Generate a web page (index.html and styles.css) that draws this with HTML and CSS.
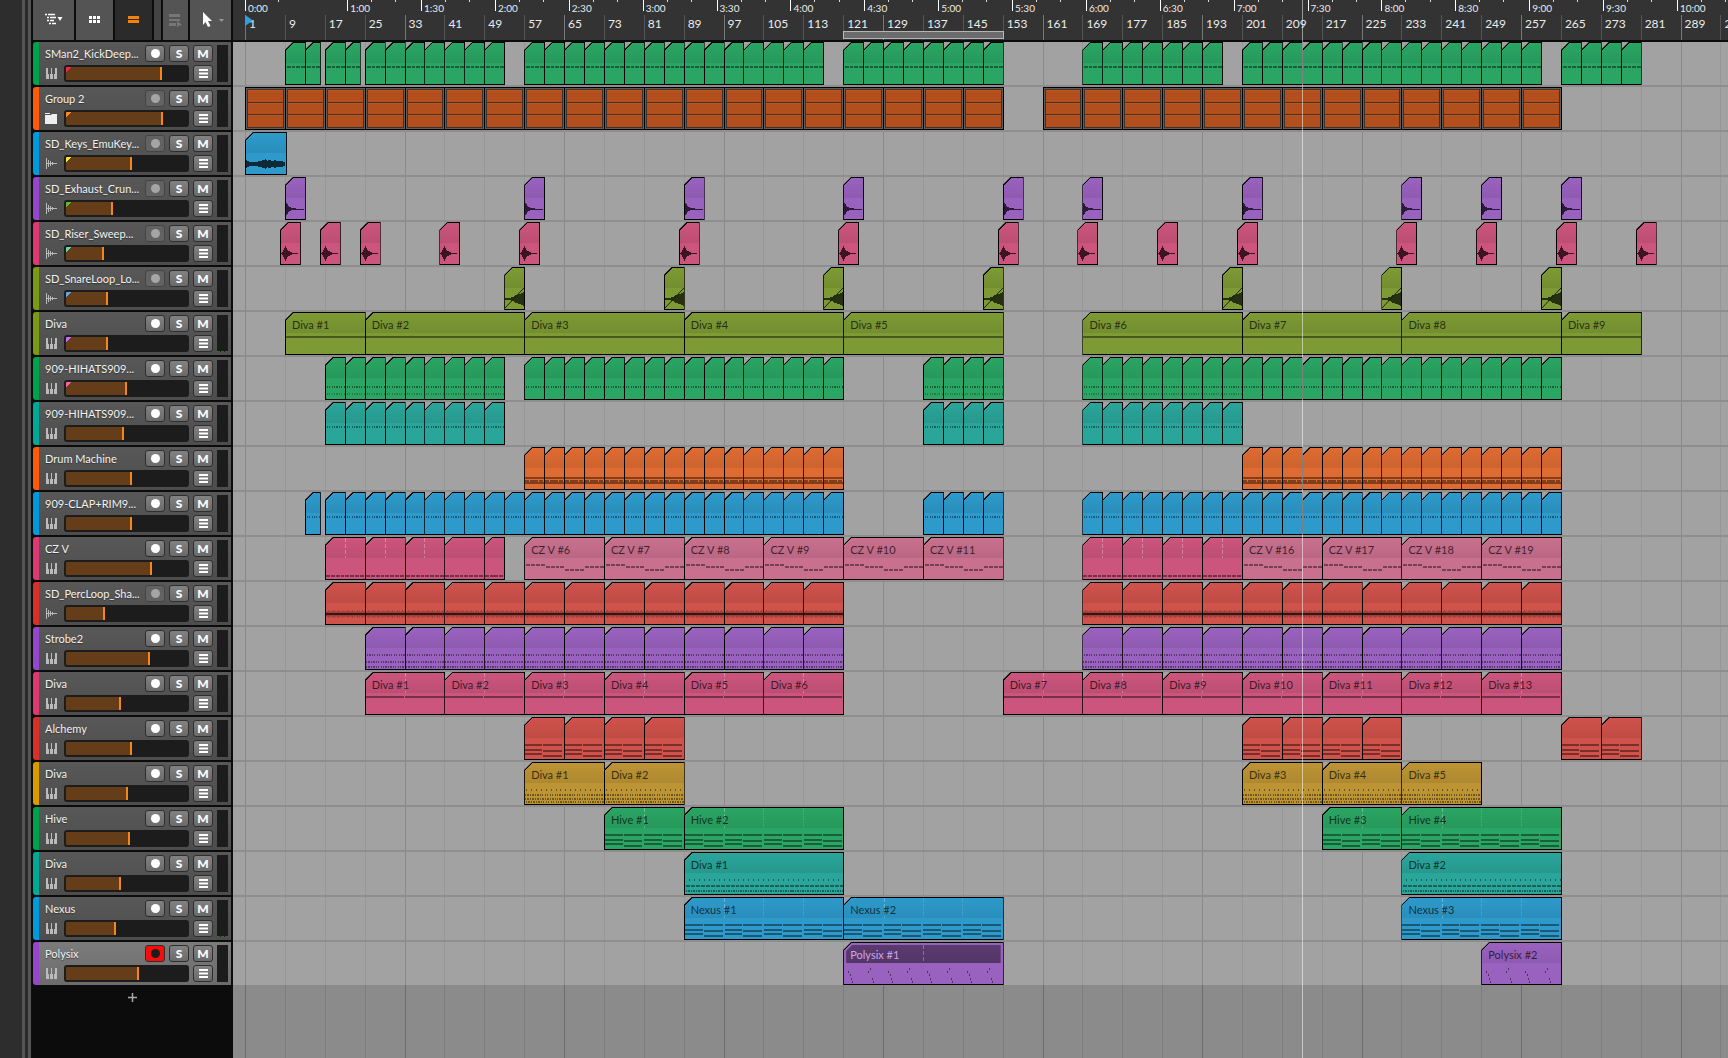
FILE: index.html
```html
<!DOCTYPE html>
<html lang="en">
    <head>
        <meta charset="UTF-8" />
        <meta name="viewport" content="width=device-width, initial-scale=1.0" />
        <title>Arranger</title>
        <link rel="stylesheet" href="styles.css">
    </head>
    <body>
        <div class="gutter"></div>
        <div class="edge"></div>
        <div class="edge"></div>
        <aside class="sidebar">
            <div class="toolbar">
                <button type="button" class="tool tool-wide" aria-label="Track view">
                    <svg width="20" height="14" viewBox="0 0 20 14">
                        <path d="M1 1.500h2M4 1.500h7M3 4.500h2M6 4.500h6M3 7.500h2M6 7.500h4M5 10.500h2M8 10.500h4" stroke="#fff" stroke-width="1.500" />
                        <path d="M13.500 4h5l-2.500 4z" fill="#fff" />
                    </svg>
                </button>
                <button type="button" class="tool" aria-label="Clip launcher">
                    <svg width="12" height="8" viewBox="0 0 12 8">
                        <path d="M0 0h3v3h-3zM4 0h3v3h-3zM8 0h3v3h-3zM0 4h3v3h-3zM4 4h3v3h-3zM8 4h3v3h-3z" fill="#fff" />
                    </svg>
                </button>
                <button type="button" class="tool active" aria-label="Arranger">
                    <svg width="12" height="8" viewBox="0 0 12 8">
                        <path d="M0 0h11v3h-11zM0 4h11v3h-11z" fill="#f5820f" />
                    </svg>
                </button>
                <div class="tool-space"></div>
                <button type="button" class="tool tool-small" aria-label="Follow" disabled>
                    <svg width="13" height="13" viewBox="0 0 13 13">
                        <path d="M0 0h11v3h-11zM0 5h11v2h-11zM0 9h7v3h-7zM8 7l5 3.500-5 2.500z" fill="#777" />
                    </svg>
                </button>
                <button type="button" class="tool tool-wide" aria-label="Pointer tool">
                    <svg width="22" height="16" viewBox="0 0 22 16">
                        <path d="M3 0l9 9h-4l2.500 5-2.500 1-2.500-5-2.500 3z" fill="#fff" />
                        <path d="M19 7h5l-2.500 3z" fill="#999" />
                    </svg>
                </button>
            </div>
            <div class="tracks" id="tracks"></div>
            <button type="button" class="add" aria-label="Add track">
                <svg width="9" height="9" viewBox="0 0 9 9"><path d="M4 0h1v4h4v1h-4v4h-1v-4h-4v-1h4z" fill="#aaa" stroke="#aaa" stroke-width=".5" /></svg>
            </button>
        </aside>
        <main class="timeline">
            <div class="ruler">
                <div class="times" id="times"></div>
                <div class="bars" id="bars"></div>
                <svg class="start" width="8" height="12" viewBox="0 0 8 12"><path d="M0 0l8 5.500-8 5.500z" fill="#2f9fe0" /></svg>
                <div class="loop" id="loop"></div>
            </div>
            <div class="canvas">
                <div class="lines" id="lines"></div>
                <div class="lanes" id="lanes"></div>
            </div>
            <div class="playhead" id="playhead"></div>
        </main>
        <script src="script.js"></script>
    </body>
</html>
```

FILE: styles.css
```css
* {
    margin: 0;
    padding: 0;
    box-sizing: border-box;
}
body {
    display: flex;
    min-height: 100vh;
    overflow: hidden;
    background-color: #0c0c0c;
    font-family: Lato, "Liberation Sans", sans-serif;
    font-size: 11px;
}
button {
    border: none;
    font-family: inherit;
    cursor: pointer;
}
.gutter {
    width: 22px;
    background-color: #2d2d2d;
}
.edge {
    width: 6px;
    border-left: 3px solid #555;
    background-color: #2a2a2a;
}
.edge + .edge {
    width: 3px;
    background-color: #555;
}
.sidebar {
    width: 202px;
    padding: 0 2px;
    flex-shrink: 0;
}

/* toolbar */
.toolbar {
    display: flex;
    gap: 2px;
    height: 40px;
    margin-bottom: 2px;
}
.tool {
    flex: 37 1 0;
    display: flex;
    justify-content: center;
    align-items: center;
    background-color: #545454;
}
.tool svg {
    overflow: visible;
}
.tool-wide {
    flex-grow: 41;
}
.tool-small {
    flex-grow: 25;
}
.tool.active {
    background-color: #2b2b2b;
}
.tool-space {
    flex: 7 1 0;
    background-color: #434343;
}

/* track headers */
.tracks {
    display: grid;
    grid-template-columns: minmax(0, 1fr);
    gap: 2px;
}
.track {
    display: flex;
    height: 43px;
    padding-right: 3px;
    border-left: 6px solid var(--strip);
    border-radius: 3px 0 0 3px;
    background: linear-gradient(#585858, #4d4d4d);
}
.track.selected {
    background: linear-gradient(#7b7b7b, #6c6c6c);
}
.track-body {
    flex: 1;
    min-width: 0;
    padding: 3px 4px 2px 6px;
}
.row {
    display: flex;
    align-items: center;
    gap: 4px;
    height: 17px;
    margin-bottom: 3px;
}
.row .name {
    flex: 1;
    min-width: 0;
    overflow: hidden;
    white-space: nowrap;
    color: #f2f2f2;
    line-height: 17px;
    text-shadow: 0 1px 1px #333;
}
.row .type {
    width: 13px;
    flex-shrink: 0;
}
.btn {
    display: flex;
    justify-content: center;
    align-items: center;
    width: 20px;
    height: 17px;
    flex-shrink: 0;
    border: 1px solid #2e2e2e;
    border-radius: 3px;
    background: linear-gradient(#828282, #6a6a6a);
    color: #fff;
    font-size: 12px;
    font-weight: 900;
    line-height: 15px;
}
.rec::before {
    content: "";
    width: 9px;
    height: 9px;
    border-radius: 50%;
    background-color: #fff;
}
.rec.off {
    border-color: #444;
    background: #626262;
}
.rec.off::before {
    background-color: #a5a5a5;
}
.rec.armed {
    background: #fa0c0c;
}
.rec.armed::before {
    background-color: #1c1c1c;
}
.volume {
    flex: 1;
    min-width: 0;
    height: 17px;
    margin-left: 2px;
    appearance: none;
    border: 2px solid #1c1c1c;
    border-radius: 3px;
    background-color: #1c1c1c;
    background-image: linear-gradient(135deg, var(--tip) 4px, transparent 4px), linear-gradient(#653d18, #653d18);
    background-size: 100% 100%, var(--level) 100%;
    background-repeat: no-repeat;
}
.volume::-webkit-slider-thumb {
    appearance: none;
    width: 2px;
    height: 13px;
    background-color: #f5861b;
}
.meter {
    width: 11px;
    height: 37px;
    flex-shrink: 0;
    margin-top: 3px;
    background-color: #1c1c1c;
}
.meter.live {
    border-bottom: 1px dashed #2e6b2e;
}
.add {
    display: block;
    width: 100%;
    height: 24px;
    background: none;
    line-height: 0;
}

/* ruler */
.timeline {
    position: relative;
    flex: 1;
    min-width: 0;
    display: flex;
    flex-direction: column;
    overflow: hidden;
}
.ruler {
    position: relative;
    height: 42px;
    border-bottom: 2px solid #0c0c0c;
    background-color: #333;
}
.times,
.bars {
    display: flex;
    padding-left: 12px;
    color: #ececec;
    white-space: nowrap;
}
.times {
    height: 15px;
    font-size: 10px;
}
.time {
    display: flex;
    flex-shrink: 0;
    height: 11px;
    border-left: 1px solid #fff;
    line-height: 16px;
}
.time span {
    width: 0;
    margin-left: 2px;
}
.time i {
    width: 33%;
    height: 2px;
    border-right: 1px solid #ddd;
}
.time i:first-of-type {
    margin-left: -2px;
}
.bar {
    flex-shrink: 0;
    height: 25px;
    padding-left: 3px;
    border-left: 1px solid #555;
    font-size: 12px;
    line-height: 18px;
}
.bar:nth-child(4n + 1) {
    border-color: #777;
}
.start {
    position: absolute;
    left: 12px;
    top: 15px;
}
.loop {
    position: absolute;
    top: 31px;
    height: 8px;
    border: 1px solid #b5b5b5;
    background-color: #6c6c6c;
}
.playhead {
    position: absolute;
    top: 0;
    bottom: 0;
    width: 1px;
    background-color: rgba(255, 255, 255, 0.5);
}

/* clips */
.canvas {
    flex: 1;
    display: grid;
    background-color: #8b8b8b;
}
.lines,
.lanes {
    grid-area: 1 / 1;
    min-width: 0;
}
.lines {
    display: flex;
    padding-left: 12px;
    overflow: hidden;
}
.lines i {
    flex-shrink: 0;
    border-left: 1px solid #7d7d7d;
}
.lines i:nth-child(4n + 1) {
    border-color: #6c6c6c;
}
.lanes {
    align-self: start;
    overflow: hidden;
}
.lane {
    display: flex;
    height: 45px;
    padding-left: 12px;
    border-bottom: 2px solid #8e8e8e;
    background-color: rgba(255, 255, 255, 0.2);
    background-clip: padding-box;
}
.lane:last-child {
    height: 43px;
    border-bottom: none;
}
.clip {
    flex-shrink: 0;
    height: 43px;
    margin-right: -1px;
    border: 1px solid #000;
    background-color: var(--clip);
    background-image: linear-gradient(135deg, #000 5px, transparent 5px);
    clip-path: polygon(8px 0, 100% 0, 100% 100%, 0 100%, 0 8px);
}
.clip .title {
    height: 20px;
    padding-left: 6px;
    overflow: hidden;
    background-image: linear-gradient(transparent, rgba(0, 0, 0, 0.08));
    color: rgba(0, 0, 0, 0.7);
    line-height: 23px;
    white-space: nowrap;
}
.clip .title.half {
    background-image: linear-gradient(transparent, rgba(0, 0, 0, 0.08)), repeating-linear-gradient(rgba(255, 255, 255, 0.3) 0 4px, transparent 4px 6px);
    background-size: 100% 100%, 1px 100%;
    background-position: 0 0, 50% 0;
    background-repeat: no-repeat;
}
.clip .title.quarters {
    background-image: linear-gradient(transparent, rgba(0, 0, 0, 0.08)), repeating-linear-gradient(rgba(255, 255, 255, 0.3) 0 4px, transparent 4px 6px), repeating-linear-gradient(rgba(255, 255, 255, 0.2) 0 1px, transparent 1px 2px), repeating-linear-gradient(rgba(255, 255, 255, 0.2) 0 1px, transparent 1px 2px);
    background-size: 100% 100%, 1px 100%, 1px 100%, 1px 100%;
    background-position: 0 0, 25% 0, 50% 0, 75% 0;
    background-repeat: no-repeat;
}
.clip svg {
    display: block;
    width: 100%;
    height: 21px;
}
.clip.selected .title {
    height: 18px;
    margin: 2px 2px 0;
    padding-left: 4px;
    background-color: #5b3a70;
    clip-path: polygon(6px 0, 100% 0, 100% 100%, 0 100%, 0 6px);
    color: #cda6e6;
    line-height: 19px;
}
.clip.group {
    display: grid;
    gap: 1px;
    padding: 2px;
    outline: 1px solid #625b58;
    outline-offset: -2px;
    background: #3a3330;
    clip-path: none;
}
.clip.group i {
    border-top: 1px solid #c4551b;
    background-color: #b24f1c;
}
```

FILE: script.js
```js
const TOTAL_BARS = 297.5;
const PAD = 12;

const pct = (bars) => (bars / TOTAL_BARS) * 100 + "%";
const at = (bar) => `calc(${PAD}px + (100% - ${PAD}px) * ${(bar - 1) / TOTAL_BARS})`;

// clips of equal length, one after another
function run(start, end, step, extra) {
    const list = [];
    for (let b = start; b < end; b += step) {
        list.push({ start: b, end: Math.min(b + step, end), ...extra });
    }
    return list;
}
const hits = (starts) => starts.map((s) => ({ start: s, end: s + 4 }));
// neighbouring named clips: [from, to, to, ...]
function named(name, n, marks, edit) {
    return marks.slice(1).map((end, i) => ({ start: marks[i], end, label: `${name} #${n + i}`, ...edit }));
}

const PINK = "#cc557d";
const tracks = [
    { name: "SMan2_KickDeep...", strip: "#00a14b", clip: "#2aa563", icon: "keys", vol: 96, tip: "#ff2347", notes: "kick",
      clips: [...run(9, 16, 4), ...run(17, 24, 4), ...run(25, 53, 4), ...run(57, 117, 4), ...run(121, 153, 4), ...run(169, 197, 4), ...run(201, 261, 4), ...run(265, 281, 4)] },
    { name: "Group 2", strip: "#ff5a0a", clip: "#b24f1c", icon: "folder", off: true, vol: 97, tip: "#ff8a1f", group: true,
      clips: [...run(1, 153, 8), ...run(161, 265, 8)] },
    { name: "SD_Keys_EmuKey...", strip: "#0099dd", clip: "#2d9acb", icon: "wave", off: true, vol: 66, tip: "#ffe324", notes: "pad", clips: [{ start: 1, end: 9.2 }] },
    { name: "SD_Exhaust_Crun...", strip: "#9447cc", clip: "#9a62bf", icon: "wave", off: true, vol: 46, tip: "#66bb22", notes: "decay", clips: hits([9, 57, 89, 121, 153, 169, 201, 233, 249, 265]) },
    { name: "SD_Riser_Sweep...", strip: "#dd3872", clip: PINK, icon: "wave", off: true, vol: 37, tip: "#66d9a0", notes: "burst", clips: hits([8, 16, 24, 40, 56, 88, 120, 152, 168, 184, 200, 232, 248, 264, 280]) },
    { name: "SD_SnareLoop_Lo...", strip: "#7a9a16", clip: "#7d9a34", icon: "wave", off: true, vol: 41, tip: "#5aa9ee", notes: "rise", clips: hits([53, 85, 117, 149, 197, 229, 261]) },
    { name: "Diva", strip: "#7a9a16", clip: "#7d9a34", icon: "keys", vol: 41, tip: "#c66bff", live: true, notes: "line",
      clips: [...named("Diva", 1, [9, 25, 57, 89, 121, 153]), ...named("Diva", 6, [169, 201, 233, 265, 281])] },
    { name: "909-HIHATS909...", strip: "#00a14b", clip: "#2aa563", icon: "keys", vol: 60, tip: "#ff5fa8", notes: "hats",
      clips: [...run(17, 53, 4, { notes: "hats2" }), ...run(57, 121, 4), ...run(137, 153, 4, { notes: "hats2" }), ...run(169, 201, 4, { notes: "hats2" }), ...run(201, 265, 4)] },
    { name: "909-HIHATS909...", strip: "#00a896", clip: "#2aa59a", icon: "keys", vol: 57, notes: "dots", clips: [...run(17, 53, 4), ...run(137, 153, 4), ...run(169, 201, 4)] },
    { name: "Drum Machine", strip: "#ff5a0a", clip: "#de6b32", icon: "keys", vol: 66, notes: "drums", clips: [...run(57, 121, 4), ...run(201, 265, 4)] },
    { name: "909-CLAP+RIM9...", strip: "#0099dd", clip: "#2d9acb", icon: "keys", vol: 66, notes: "dots", clips: [{ start: 13, end: 16 }, ...run(17, 121, 4), ...run(137, 153, 4), ...run(169, 265, 4)] },
    { name: "CZ V", strip: "#dd3872", clip: PINK, icon: "keys", vol: 86, notes: "low",
      clips: [...run(17, 41, 8, { mark: "half" }), ...run(41, 53, 8), ...named("CZ V", 6, [57, 73, 89, 105, 121, 137, 153], { color: "#c9708f", notes: "steps" }),
              ...run(169, 201, 8, { mark: "half" }), ...named("CZ V", 16, [201, 217, 233, 249, 265], { color: "#c9708f", notes: "steps" })] },
    { name: "SD_PercLoop_Sha...", strip: "#d92f26", clip: "#cf524b", icon: "wave", off: true, vol: 38, notes: "perc", clips: [...run(17, 121, 8), ...run(169, 265, 8)] },
    { name: "Strobe2", strip: "#9447cc", clip: "#9a62bf", icon: "keys", vol: 84, notes: "strobe", clips: [...run(25, 121, 8), ...run(169, 265, 8)] },
    { name: "Diva", strip: "#dd3872", clip: PINK, icon: "keys", vol: 54, notes: "halves",
      clips: [...named("Diva", 1, [25, 41, 57, 73, 89, 105, 121], { mark: "half" }), ...named("Diva", 7, [153, 169, 185, 201, 217, 233, 249, 265], { mark: "half" })] },
    { name: "Alchemy", strip: "#d92f26", clip: "#cf524b", icon: "keys", vol: 66, notes: "chords", clips: [...run(57, 89, 8), ...run(201, 233, 8), ...run(265, 281, 8)] },
    { name: "Diva", strip: "#d99a00", clip: "#bd9434", icon: "keys", vol: 62, notes: "arp", clips: [...named("Diva", 1, [57, 73, 89]), ...named("Diva", 3, [201, 217, 233, 249])] },
    { name: "Hive", strip: "#00a14b", clip: "#2aa563", icon: "keys", vol: 64, notes: "chords",
      clips: [{ start: 73, end: 89, label: "Hive #1", mark: "half" }, { start: 89, end: 121, label: "Hive #2", mark: "quarters" }, { start: 217, end: 233, label: "Hive #3", mark: "half" }, { start: 233, end: 265, label: "Hive #4", mark: "quarters" }] },
    { name: "Diva", strip: "#00a896", clip: "#2aa59a", icon: "keys", vol: 54, notes: "seq", clips: [{ start: 89, end: 121, label: "Diva #1" }, { start: 233, end: 265, label: "Diva #2" }] },
    { name: "Nexus", strip: "#0099dd", clip: "#2d9acb", icon: "keys", vol: 49, live: true, notes: "chords",
      clips: [...named("Nexus", 1, [89, 121, 153], { mark: "quarters" }), ...named("Nexus", 3, [233, 265], { mark: "quarters" })] },
    { name: "Polysix", strip: "#9447cc", clip: "#9a62bf", icon: "keys", vol: 73, selected: true, notes: "falls",
      clips: [{ start: 121, end: 153, label: "Polysix #1", mark: "half", selected: true }, { start: 249, end: 265, label: "Polysix #2" }] },
];

const icons = {
    keys: '<path d="M1 1h2v6h1v5h-3zM6 1h1v6h1v5h-3v-5h1zM10 1h2v11h-3v-5h1z" fill="#bbb"/>',
    folder: '<path d="M0 1h5v1h-5zM0 3h6l1-1h5v10h-12z" fill="#eee"/>',
    wave: '<path d="M1.500 1v11M3.500 3v7M5.500 4v5M7.500 5v3M9.500 6v1M1 6.500h11" stroke="#bbb" fill="none"/>',
};

// one row of note blocks, as path data
function row(w, y, period, on, offset = 0, h = 2) {
    let d = "";
    for (let x = offset; x < w; x += period) {
        d += `M${x} ${y}h${Math.min(on, w - x)}v${h}h-${Math.min(on, w - x)}z`;
    }
    return d;
}
const ink = (d, opacity = 0.42) => `<path d="${d}" fill="#000" fill-opacity="${opacity}"/>`;

const draw = {
    kick: (w) => ink(row(w, 3, 5, 4, 1)),
    line: (w) => ink(row(w, 3, w, w)),
    hats: (w) => ink(row(w, 8, 2.5, 1.25, 1)),
    hats2: (w) => ink(row(w, 8, 2.5, 1.25, 1)) + ink(row(w, 15, 2.5, 1.25, 1), 0.22),
    dots: (w) => ink(row(w, 3, 2.5, 1.25, 1)),
    drums: (w) => ink(row(w, 9, w, w) + row(w, 12, 5, 4) + row(w, 14, w, w)),
    low: (w) => ink(row(w, 17, 5, 4)),
    steps(w) {
        let d = "";
        [6, 8, 11, 8].forEach((y, i) => {
            d += row((w / 4) * (i + 1), y, 5, 4, (w / 4) * i + 1);
        });
        return ink(d);
    },
    strobe: (w) => ink(row(w, 6, 2.5, 1.25, 1) + row(w, 13, 2.5, 1.25) + row(w, 18, 2.5, 1.25)),
    halves: (w) => ink(row(w, 3, 40, 39)),
    chords(w) {
        return ink([6, 11, 15].map((y) => row(w, y, 40, 18)).join("") + [6, 12, 17].map((y) => row(w, y, 40, 19, 20 - 1)).join(""));
    },
    arp: (w) => ink(row(w, 6, 5, 1, 1) + row(w, 11, 2.5, 1.25) + row(w, 15, 2.5, 1.5) + row(w, 18, 2.5, 1.25, 1)),
    seq: (w) => ink(row(w, 6, 5, 1, 4) + row(w, 12, 5, 4, 1) + row(w, 17, 2.5, 1.5, 1)),
    falls(w) {
        let d = "";
        for (let x = 4; x < w; x += 40) {
            [[0, 8], [2, 11], [3, 15], [4, 18], [22, 5], [20, 8], [24, 15], [25, 18]].forEach(([dx, y]) => {
                d += `M${x + dx} ${y}h1v2h-1z`;
            });
        }
        return ink(d, 0.5);
    },
    perc(w) {
        let fuzz = "";
        for (let x = 0; x < w; x++) {
            const a = 2 + ((x * 7) % 5) * 0.5;
            fuzz += `M${x} ${11 - a}h.8v${a * 2}h-.8z`;
        }
        return `<g shape-rendering="auto">${ink(fuzz, 0.3)}</g>` + ink(`M0 10h${w}v2h-${w}z`, 0.65);
    },
    pad(w) {
        const amp = [5, 4, 2, 2, 2, 3, 3, 4, 4, 5, 6, 4, 5, 4, 4, 5, 4, 3, 4, 3, 2];
        const top = amp.map((a, i) => `L${i * 2} ${11 - a * 0.8}`).join("");
        const low = amp.map((a, i) => `L${i * 2} ${11 + a * 0.8}`).reverse().join("");
        return `<path d="M0 11${top}${low}z" fill="#0b2b3a"/>`;
    },
    decay: () => '<path d="M0 4l2 3 2 2 3 1 4 .5h8v1h-8l-4 .5-3 1-2 2-2 3z" fill="#2c1a3a"/>',
    burst: () => '<path d="M0 10l2-1 1-3 2-3 1 3 2 2 2 1 3 1h5v1h-5l-3 1-2 1-2 2-1 3-2-3-1-3-2-1z" fill="#3c1424"/>',
    rise: () => '<path d="M0 10h4l4-1 4-2 4-1 4-2v14l-4-2-4-1-4-2-4-1h-4z" fill="#273010"/><path d="M0 20L20 0" stroke="#1b220a"/>',
};

function clipHtml(track, clip, prevEnd) {
    const len = clip.end - clip.start;
    const style = `margin-left:${pct(clip.start - prevEnd)};width:calc(${pct(len)} + 1px)${clip.color ? ";--clip:" + clip.color : ""}`;
    if (track.group) {
        return `<div class="clip group" style="${style}"><i></i><i></i><i></i></div>`;
    }
    const w = len * 5;
    return `<div class="clip ${clip.selected ? "selected" : ""}" style="${style}">
        <div class="title ${clip.mark || ""}">${clip.label || ""}</div>
        <svg viewBox="0 0 ${w} 21" preserveAspectRatio="none" shape-rendering="crispEdges">${draw[clip.notes || track.notes](w)}</svg>
    </div>`;
}

function trackHtml(t, i) {
    const rec = t.selected ? "armed" : t.off ? "off" : "";
    return `<section class="track ${t.selected ? "selected" : ""}" style="--strip:${t.strip}">
        <div class="track-body">
            <div class="row">
                <label class="name" for="volume-${i}">${t.name}</label>
                <button type="button" class="btn rec ${rec}" aria-label="Record"></button>
                <button type="button" class="btn">S</button>
                <button type="button" class="btn">M</button>
            </div>
            <div class="row">
                <svg class="type" width="13" height="13" viewBox="0 0 13 13">${icons[t.icon]}</svg>
                <input type="range" class="volume" id="volume-${i}" max="122" value="${t.vol}" style="--level:${(t.vol / 122) * 100}%;--tip:${t.tip || "transparent"}" />
                <button type="button" class="btn" aria-label="Track menu">
                    <svg width="9" height="9" viewBox="0 0 9 9"><path d="M0 0h9v2h-9zM0 3.500h9v2h-9zM0 7h9v2h-9z" fill="#fff"/></svg>
                </button>
            </div>
        </div>
        <div class="meter ${t.live ? "live" : ""}"></div>
    </section>`;
}

document.getElementById("tracks").innerHTML = tracks.map(trackHtml).join("");

document.getElementById("lanes").innerHTML = tracks
    .map((t) => {
        let prev = 1;
        const clips = t.clips.map((c) => {
            const html = clipHtml(t, c, prev);
            prev = c.end;
            return html;
        });
        return `<div class="lane" style="--clip:${t.clip}">${clips.join("")}</div>`;
    })
    .join("");

let bars = "";
let lines = "";
for (let b = 1; b <= 297; b += 8) {
    bars += `<div class="bar" style="width:${pct(8)}">${b}</div>`;
    lines += `<i style="width:${pct(8)}"></i>`;
}
document.getElementById("bars").innerHTML = bars;
document.getElementById("lines").innerHTML = lines;

let times = `<div class="time" style="width:${pct(20.5)}"><span>0:00</span><i></i></div>`;
for (let s = 60; s <= 600; s += 30) {
    const label = Math.floor(s / 60) + ":" + String(s % 60).padStart(2, "0");
    times += `<div class="time" style="width:${pct(14.82)}"><span>${label}</span><i></i><i></i></div>`;
}
document.getElementById("times").innerHTML = times;

const loop = document.getElementById("loop");
loop.style.left = at(121);
loop.style.width = `calc((100% - ${PAD}px) * ${32 / TOTAL_BARS} + 1px)`;
document.getElementById("playhead").style.left = at(213);
```
